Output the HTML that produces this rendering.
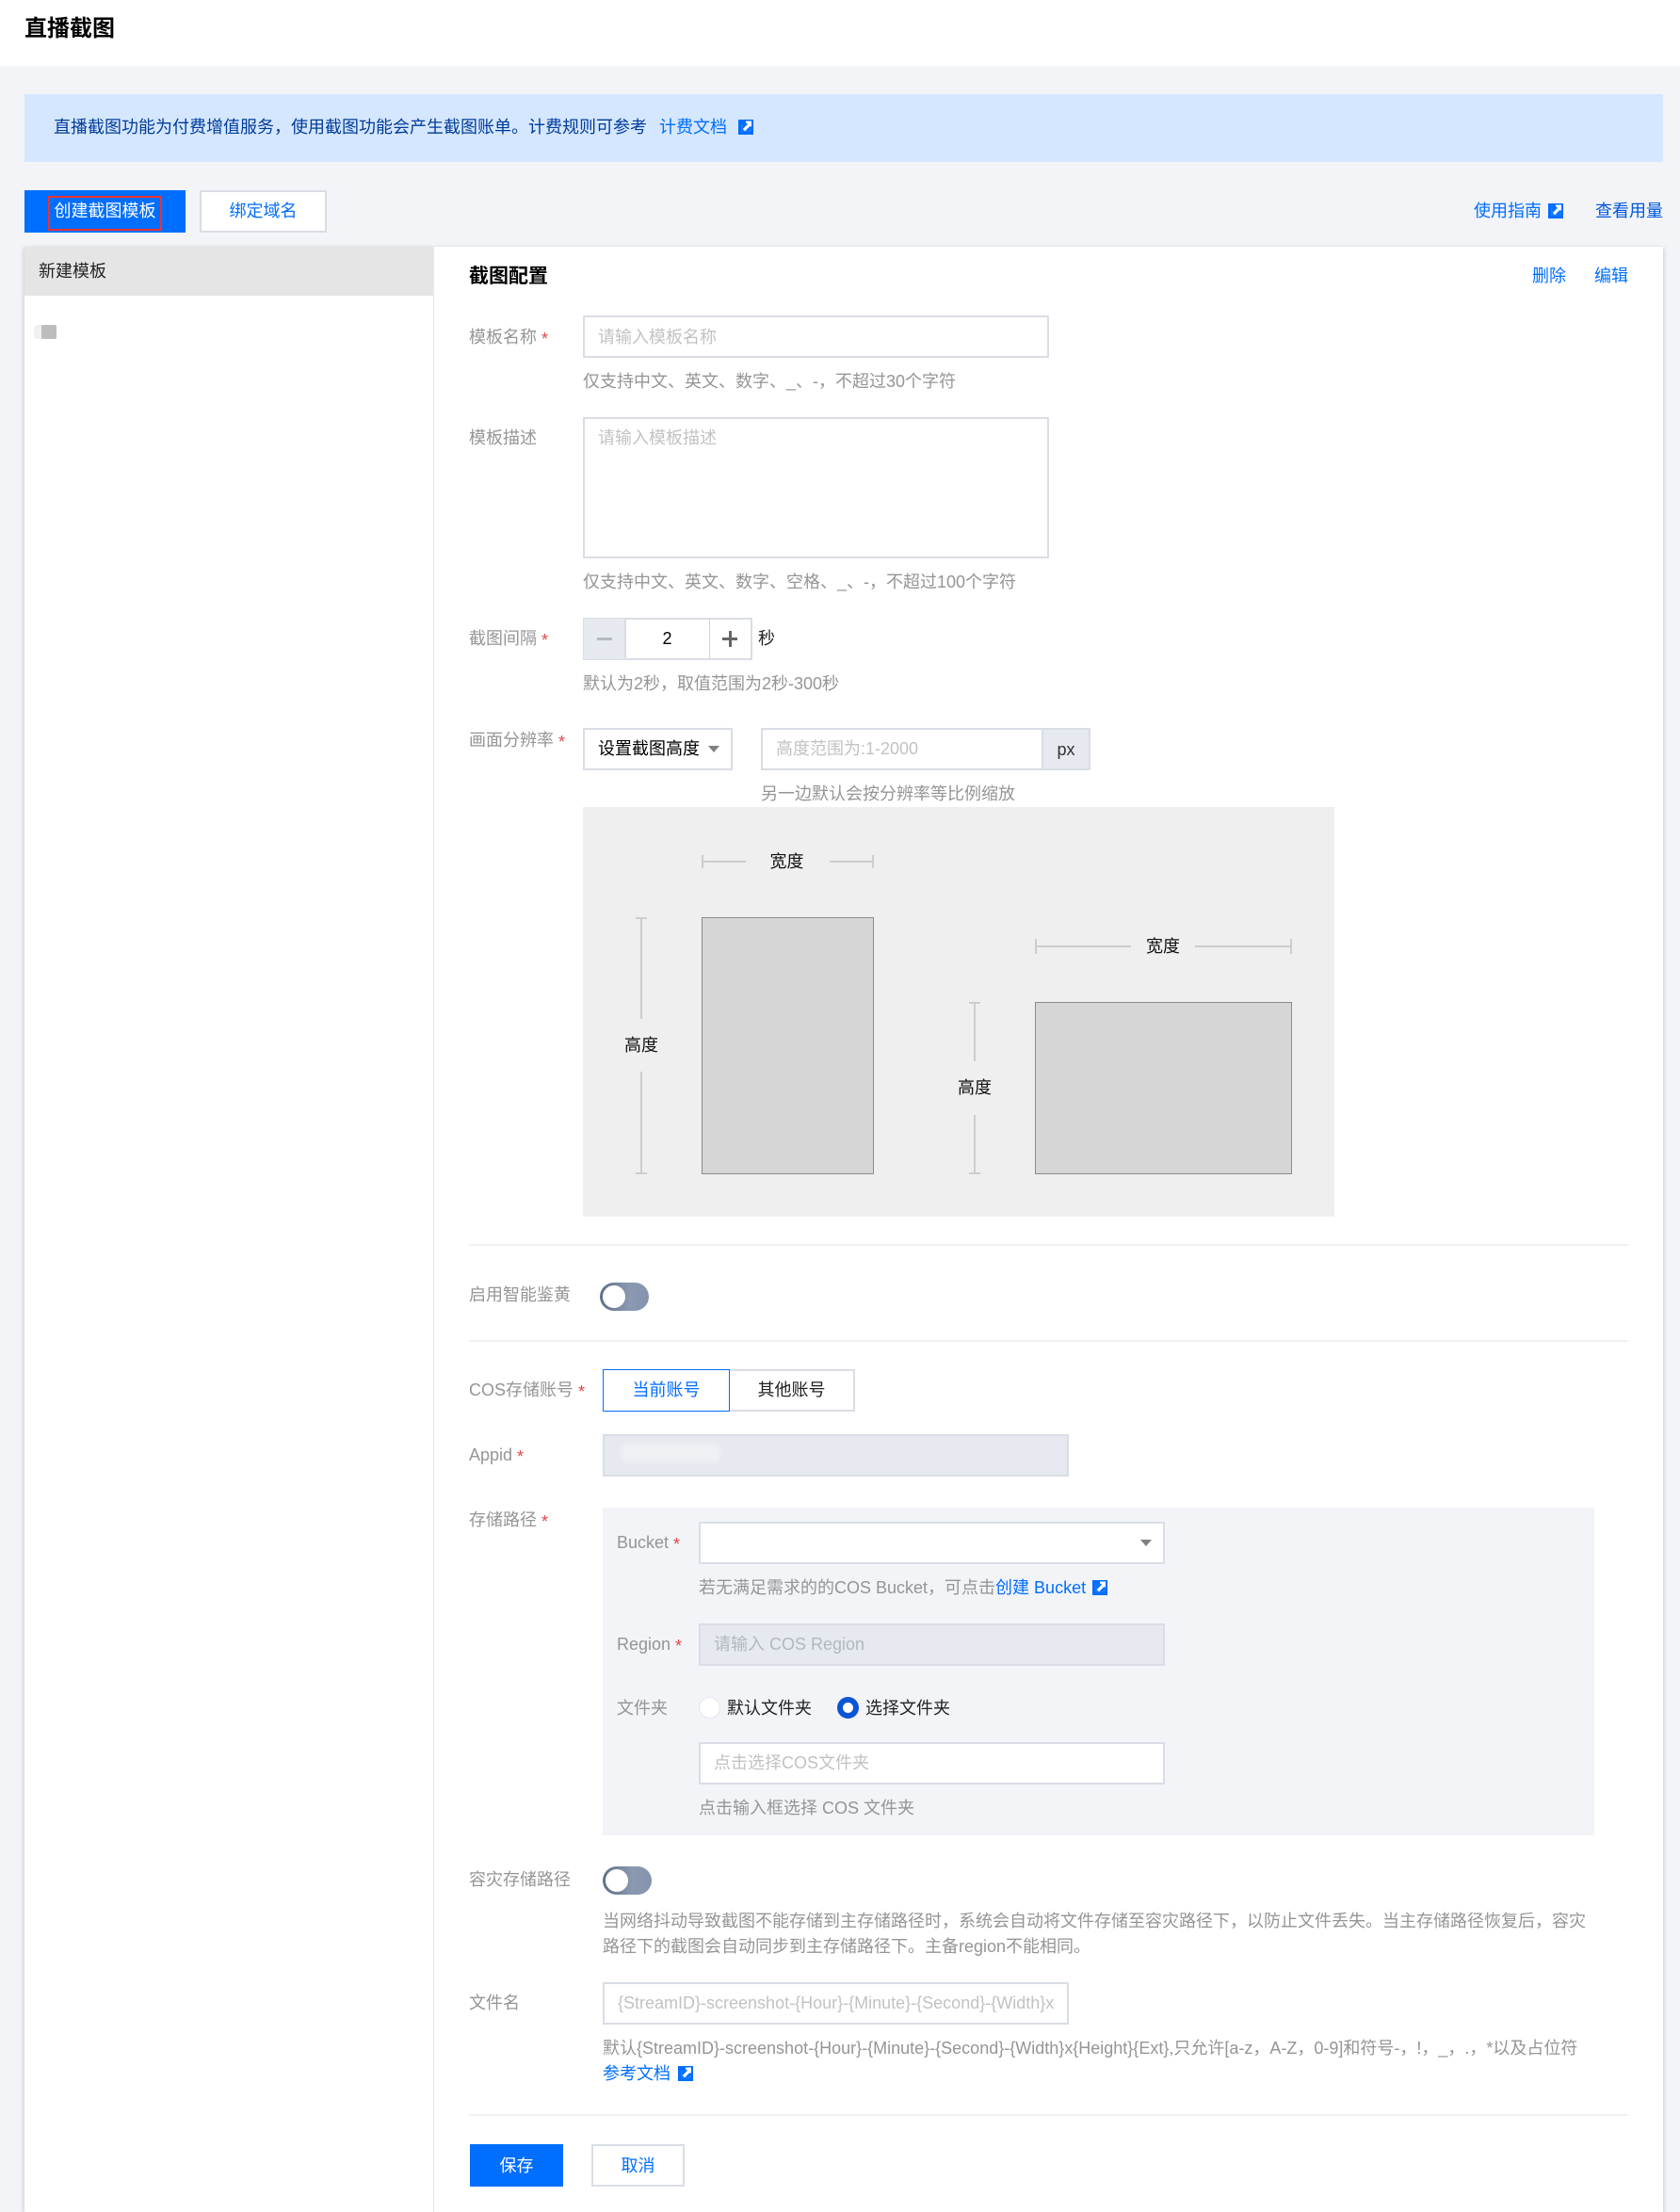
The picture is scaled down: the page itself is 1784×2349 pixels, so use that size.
<!DOCTYPE html>
<html lang="zh-CN">
<head>
<meta charset="utf-8">
<title>直播截图</title>
<style>
*{box-sizing:border-box;margin:0;padding:0}
html,body{width:1784px;height:2349px;overflow:hidden;background:#f2f4f8}
body{position:relative;font-family:"Liberation Sans","Noto Sans CJK SC",sans-serif;font-size:18px;color:#000}
.a{position:absolute}
.t{position:absolute;white-space:nowrap;line-height:30px;height:30px;font-size:18px}
.l{color:#959595}
.n{color:#959595}
.p{color:#c2c2c2}
.b{color:#006eff}
.k{color:#000}
.r::after{content:"*";color:#e54545;margin-left:5px;font-size:18px;position:relative;top:2px;line-height:1}
.box{position:absolute;border:2px solid #d9dde5;background:#fff}
.dis{background:#e6e9ef}
.line{position:absolute;background:#cdcdcd}
svg.i{position:absolute;width:16px;height:16px}
.rect{position:absolute;background:#d6d6d6;border:1px solid #8c8c8c}
.sw{position:absolute;border-radius:16px;background:linear-gradient(90deg,#5f6f88,#8a99b0 60%,#8494ac)}
.sw i{position:absolute;left:3px;top:3px;bottom:3px;width:24px;border-radius:14px;background:#fff}
.c{text-align:center}
</style>
</head>
<body>
<svg width="0" height="0" style="position:absolute"><defs><symbol id="e" viewBox="0 0 16 16"><path fill="#006eff" d="M0 0h16v16H0z"/><path fill="#fff" d="M8 1.500h6v6L12.200 7.200 7 12.200 4.800 10 10 4.800 8 3.200z"/><path fill="#fff" d="M3 13V5h1.500v6.500H12V9h1.500v4z" opacity=".12"/></symbol></defs></svg>

<div class="a" style="left:0;top:0;width:1784px;height:70px;background:#fff"></div>
<div class="t" style="left:26px;top:16px;font-size:24px;font-weight:700;color:#000">直播截图</div>

<div class="a" style="left:26px;top:100px;width:1740px;height:72px;background:#d5e7ff"></div>
<div class="t" style="left:57px;top:120px;color:#003b9b">直播截图功能为付费增值服务，使用截图功能会产生截图账单。计费规则可参考</div>
<div class="t b" style="left:700px;top:120px">计费文档</div>
<svg class="i" style="left:784px;top:127px"><use href="#e"/></svg>

<div class="a" style="left:26px;top:202px;width:171px;height:45px;background:#006eff"></div>
<div class="a" style="left:51px;top:208px;width:121px;height:37px;border:2px solid #f33030"></div>
<div class="t c" style="left:26px;top:209px;width:171px;color:#fff">创建截图模板</div>
<div class="box c" style="left:212px;top:202px;width:135px;height:45px;line-height:41px;color:#006eff">绑定域名</div>

<div class="t b" style="left:1565px;top:209px">使用指南</div>
<svg class="i" style="left:1644px;top:216px"><use href="#e"/></svg>
<div class="t" style="left:1694px;top:209px;color:#0057e0">查看用量</div>

<div class="a" style="left:26px;top:262px;width:1740px;height:2087px;background:#fff;box-shadow:0 2px 5px rgba(54,58,80,.3)"></div>
<div class="a" style="left:26px;top:262px;width:434px;height:52px;background:#e5e5e5"></div>
<div class="a" style="left:460px;top:262px;width:1px;height:2087px;background:#e8e8ec"></div>
<div class="t" style="left:41px;top:273px;color:#222">新建模板</div>
<div class="a" style="left:36px;top:345px;width:10px;height:15px;background:#f0f0f0;border-radius:4px 0 0 4px"></div>
<div class="a" style="left:44px;top:345px;width:16px;height:15px;background:#bdbdbd;border-radius:2px"></div>

<div class="t" style="left:498px;top:279px;font-size:21px;font-weight:700;color:#000">截图配置</div>
<div class="t b" style="left:1627px;top:278px">删除</div>
<div class="t b" style="left:1693px;top:278px">编辑</div>

<!-- template name -->
<div class="t l r" style="left:498px;top:343px">模板名称</div>
<div class="box" style="left:619px;top:335px;width:495px;height:45px"></div>
<div class="t p" style="left:635px;top:343px">请输入模板名称</div>
<div class="t n" style="left:619px;top:390px">仅支持中文、英文、数字、_、-，不超过30个字符</div>

<!-- description -->
<div class="t l" style="left:498px;top:450px">模板描述</div>
<div class="box" style="left:619px;top:443px;width:495px;height:150px"></div>
<div class="t p" style="left:635px;top:450px">请输入模板描述</div>
<div class="t n" style="left:619px;top:603px">仅支持中文、英文、数字、空格、_、-，不超过100个字符</div>

<!-- interval -->
<div class="t l r" style="left:498px;top:663px">截图间隔</div>
<div class="box" style="left:619px;top:656px;width:180px;height:45px"></div>
<div class="a dis" style="left:620px;top:657px;width:45px;height:43px;border-right:2px solid #d9dde5"></div>
<div class="a" style="left:753px;top:657px;width:1px;height:43px;background:#cfd5de"></div>
<div class="a" style="left:634px;top:677px;width:16px;height:3px;background:#b4bac4"></div>
<div class="a" style="left:767px;top:677px;width:16px;height:3px;background:#666"></div>
<div class="a" style="left:774px;top:670px;width:3px;height:17px;background:#666"></div>
<div class="t c" style="left:664px;top:663px;width:89px">2</div>
<div class="t" style="left:805px;top:663px;color:#222">秒</div>
<div class="t n" style="left:619px;top:711px">默认为2秒，取值范围为2秒-300秒</div>

<!-- resolution -->
<div class="t l r" style="left:498px;top:771px">画面分辨率</div>
<div class="box" style="left:619px;top:773px;width:159px;height:45px"></div>
<div class="t k" style="left:635px;top:780px">设置截图高度</div>
<div class="a" style="left:752px;top:792px;width:0;height:0;border-left:6px solid transparent;border-right:6px solid transparent;border-top:7px solid #808080"></div>
<div class="box" style="left:808px;top:773px;width:350px;height:45px"></div>
<div class="a dis" style="left:1106px;top:773px;width:52px;height:45px;border:2px solid #d9dde5;text-align:center;line-height:43px;color:#333">px</div>
<div class="t p" style="left:824px;top:780px">高度范围为:1-2000</div>
<div class="t n" style="left:808px;top:828px">另一边默认会按分辨率等比例缩放</div>

<!-- diagram -->
<div class="a" style="left:619px;top:857px;width:798px;height:435px;background:#efefef"></div>
<div class="line" style="left:745px;top:914px;width:47px;height:2px"></div>
<div class="line" style="left:745px;top:908px;width:2px;height:14px"></div>
<div class="line" style="left:881px;top:914px;width:47px;height:2px"></div>
<div class="line" style="left:926px;top:908px;width:2px;height:14px"></div>
<div class="t c" style="left:791px;top:900px;width:89px;color:#111">宽度</div>
<div class="rect" style="left:745px;top:974px;width:183px;height:273px"></div>

<div class="line" style="left:680px;top:974px;width:2px;height:108px"></div>
<div class="line" style="left:675px;top:974px;width:12px;height:2px"></div>
<div class="line" style="left:680px;top:1138px;width:2px;height:109px"></div>
<div class="line" style="left:675px;top:1245px;width:12px;height:2px"></div>
<div class="t c" style="left:641px;top:1095px;width:80px;color:#111">高度</div>

<div class="line" style="left:1099px;top:1004px;width:102px;height:2px"></div>
<div class="line" style="left:1099px;top:997px;width:2px;height:16px"></div>
<div class="line" style="left:1269px;top:1004px;width:103px;height:2px"></div>
<div class="line" style="left:1370px;top:997px;width:2px;height:16px"></div>
<div class="t c" style="left:1201px;top:990px;width:68px;color:#111">宽度</div>
<div class="rect" style="left:1099px;top:1064px;width:273px;height:183px"></div>

<div class="line" style="left:1034px;top:1064px;width:2px;height:63px"></div>
<div class="line" style="left:1029px;top:1064px;width:12px;height:2px"></div>
<div class="line" style="left:1034px;top:1184px;width:2px;height:63px"></div>
<div class="line" style="left:1029px;top:1245px;width:12px;height:2px"></div>
<div class="t c" style="left:995px;top:1140px;width:80px;color:#111">高度</div>

<div class="a" style="left:498px;top:1321px;width:1231px;height:2px;background:#f0f1f4"></div>

<!-- smart -->
<div class="t l" style="left:498px;top:1360px">启用智能鉴黄</div>
<div class="sw" style="left:637px;top:1362px;width:52px;height:30px"><i></i></div>
<div class="a" style="left:498px;top:1423px;width:1231px;height:2px;background:#f0f1f4"></div>

<!-- COS -->
<div class="t l r" style="left:498px;top:1461px">COS存储账号</div>
<div class="a c" style="left:640px;top:1454px;width:135px;height:45px;border:1px solid #006eff;background:#fff;color:#006eff;line-height:43px;z-index:2">当前账号</div>
<div class="box c" style="left:773px;top:1454px;width:135px;height:45px;line-height:41px;color:#222">其他账号</div>

<div class="t l r" style="left:498px;top:1530px">Appid</div>
<div class="box dis" style="left:640px;top:1523px;width:495px;height:45px"></div>
<div class="a" style="left:660px;top:1533px;width:105px;height:20px;background:#eef0f3;border-radius:6px;filter:blur(3px)"></div>

<div class="t l r" style="left:498px;top:1599px">存储路径</div>
<div class="a" style="left:640px;top:1601px;width:1053px;height:348px;background:#f2f4f8"></div>

<div class="t l r" style="left:655px;top:1623px">Bucket</div>
<div class="box" style="left:742px;top:1616px;width:495px;height:45px"></div>
<div class="a" style="left:1211px;top:1635px;width:0;height:0;border-left:6px solid transparent;border-right:6px solid transparent;border-top:7px solid #808080"></div>
<div class="t n" style="left:742px;top:1671px">若无满足需求的的COS Bucket，可点击<span style="color:#006eff">创建 Bucket</span></div>
<svg class="i" style="left:1160px;top:1678px"><use href="#e"/></svg>

<div class="t l r" style="left:655px;top:1731px">Region</div>
<div class="box dis" style="left:742px;top:1724px;width:495px;height:45px"></div>
<div class="t" style="left:758px;top:1731px;color:#b2b7be">请输入 COS Region</div>

<div class="t l" style="left:655px;top:1799px">文件夹</div>
<div class="a" style="left:742px;top:1802px;width:23px;height:23px;border-radius:50%;background:#fff;border:1px solid #e3e6eb"></div>
<div class="t" style="left:772px;top:1799px;color:#222">默认文件夹</div>
<div class="a" style="left:889px;top:1802px;width:23px;height:23px;border-radius:50%;background:#fff;border:6px solid #0a55d6"></div>
<div class="t" style="left:919px;top:1799px;color:#222">选择文件夹</div>
<div class="box" style="left:742px;top:1850px;width:495px;height:45px"></div>
<div class="t p" style="left:758px;top:1857px">点击选择COS文件夹</div>
<div class="t n" style="left:742px;top:1905px">点击输入框选择 COS 文件夹</div>

<!-- disaster -->
<div class="t l" style="left:498px;top:1981px">容灾存储路径</div>
<div class="sw" style="left:640px;top:1982px;width:52px;height:30px"><i></i></div>
<div class="t n" style="left:640px;top:2025px">当网络抖动导致截图不能存储到主存储路径时，系统会自动将文件存储至容灾路径下，以防止文件丢失。当主存储路径恢复后，容灾</div>
<div class="t n" style="left:640px;top:2052px">路径下的截图会自动同步到主存储路径下。主备region不能相同。</div>

<!-- filename -->
<div class="t l" style="left:498px;top:2112px">文件名</div>
<div class="box" style="left:640px;top:2105px;width:495px;height:45px"></div>
<div class="t p" style="left:656px;top:2112px;width:464px;overflow:hidden">{StreamID}-screenshot-{Hour}-{Minute}-{Second}-{Width}x{Height}{Ext}</div>
<div class="t n" style="left:640px;top:2160px">默认{StreamID}-screenshot-{Hour}-{Minute}-{Second}-{Width}x{Height}{Ext},只允许[a-z，A-Z，0-9]和符号-，!，_，.，*以及占位符</div>
<div class="t b" style="left:640px;top:2187px">参考文档</div>
<svg class="i" style="left:720px;top:2194px"><use href="#e"/></svg>

<div class="a" style="left:498px;top:2245px;width:1231px;height:2px;background:#f0f1f4"></div>

<div class="a c" style="left:499px;top:2277px;width:99px;height:45px;background:#006eff;color:#fff;line-height:46px">保存</div>
<div class="box c" style="left:628px;top:2277px;width:99px;height:45px;line-height:42px;color:#006eff">取消</div>
</body>
</html>
